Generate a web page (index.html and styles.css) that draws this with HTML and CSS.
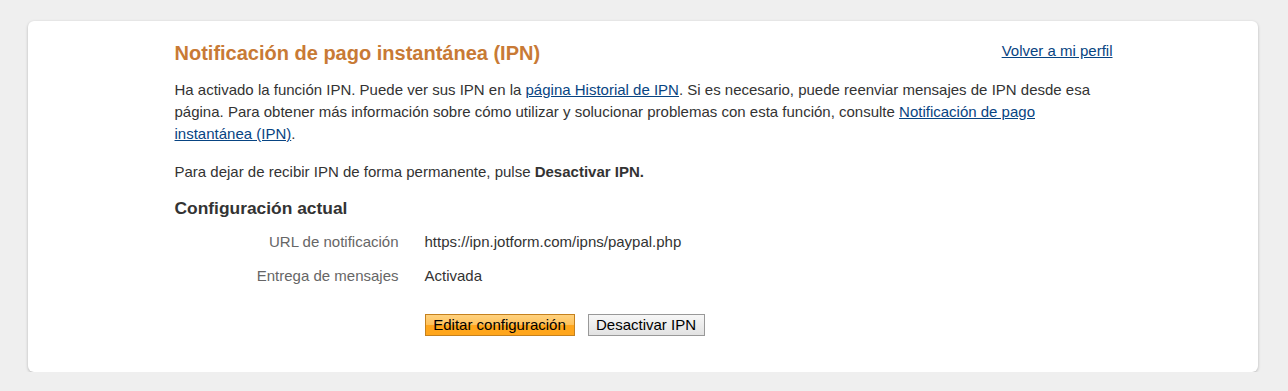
FILE: index.html
```html
<!DOCTYPE html>
<html lang="es">
  <head>
    <meta charset="UTF-8" />
    <meta name="viewport" content="width=device-width, initial-scale=1.0" />
    <title>Notificación de pago instantánea (IPN)</title>
    <link rel="stylesheet" href="styles.css">
  </head>
  <body>
    <div class="card">
      <div class="content">
        <div class="header">
          <h1 class="title">Notificación de pago instantánea (IPN)</h1>
          <a href="#" class="back-link">Volver a mi perfil</a>
        </div>
        <p class="text">
          Ha activado la función IPN. Puede ver sus IPN en la <a href="#">página Historial de IPN</a>. Si es necesario, puede reenviar mensajes de IPN desde esa página. Para obtener más información sobre cómo utilizar y solucionar problemas con esta función, consulte <a href="#">Notificación de pago instantánea (IPN)</a>.
        </p>
        <p class="text">
          Para dejar de recibir IPN de forma permanente, pulse <strong>Desactivar IPN.</strong>
        </p>
        <h2 class="subtitle">Configuración actual</h2>
        <div class="settings">
          <div class="label">URL de notificación</div>
          <div class="value">https://ipn.jotform.com/ipns/paypal.php</div>
          <div class="label">Entrega de mensajes</div>
          <div class="value">Activada</div>
        </div>
        <div class="buttons">
          <button class="button primary">Editar configuración</button>
          <button class="button secondary">Desactivar IPN</button>
        </div>
      </div>
    </div>
  </body>
</html>
```
FILE: styles.css
```css
body {
  font-family: "Liberation Sans", Arial, sans-serif;
  font-size: 15px;
  color: #333;
  background-color: #efefef;
  margin: 0;
  padding: 21px 30px 0 28px;
}

.card {
  background-color: #fff;
  border-radius: 6px;
  box-shadow: 0 1px 3px rgba(0, 0, 0, 0.25);
  height: 351px;
  box-sizing: border-box;
  padding-top: 19px;
}

.content {
  width: 938px;
  margin: 0 auto;
  padding-left: 1px;
}

a {
  color: #084482;
}

.header {
  display: flex;
  justify-content: space-between;
  align-items: flex-start;
}

.title {
  color: #c87a35;
  font-size: 20px;
  font-weight: bold;
  margin: 0;
  line-height: 26px;
}

.back-link {
  font-size: 15px;
  line-height: 22px;
}

.text {
  line-height: 22px;
  margin: 13px 0 0;
}

.text + .text {
  margin-top: 16px;
}

.subtitle {
  font-size: 17.4px;
  font-weight: bold;
  margin: 12px 0 0;
  line-height: 26px;
}

.settings {
  display: grid;
  grid-template-columns: 224px auto;
  column-gap: 26px;
  row-gap: 12px;
  margin-top: 10px;
  line-height: 22px;
}

.label {
  color: #666;
  text-align: right;
}

.buttons {
  display: flex;
  gap: 13px;
  margin-top: 27px;
  padding-left: 250px;
}

.button {
  font-family: "Liberation Sans", Arial, sans-serif;
  font-size: 15px;
  color: #000;
  height: 22px;
  padding: 0 6px;
  cursor: pointer;
  line-height: 20px;
}

.button.primary {
  width: 150px;
  background: linear-gradient(#ffd27f 0%, #ffc15a 50%, #ffa61c 51%, #ffa61c 100%);
  border: 1px solid #c5811e;
}

.button.secondary {
  width: 117px;
  background: linear-gradient(#f7f7f7, #e2e2e2);
  border: 1px solid #999;
}
```
